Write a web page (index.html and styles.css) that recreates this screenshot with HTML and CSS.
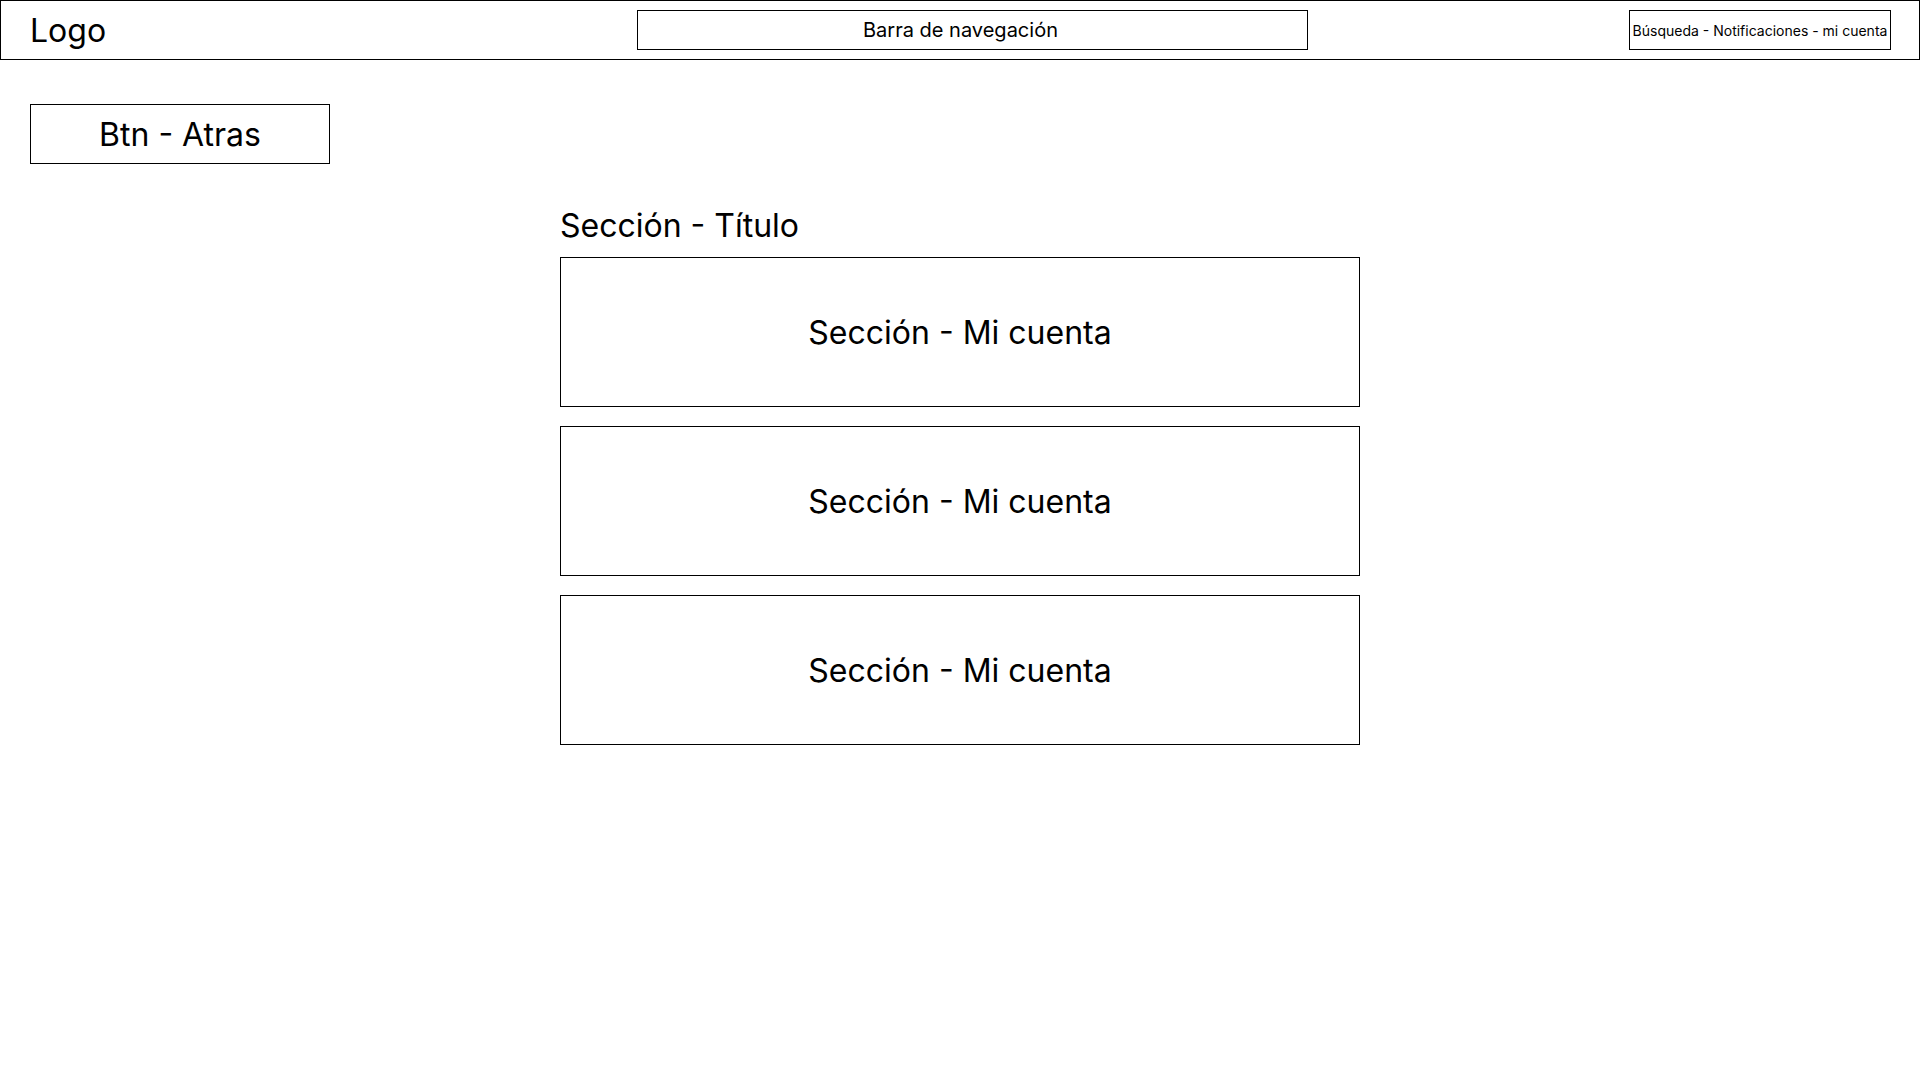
FILE: index.html
```html
<!DOCTYPE html>
<html lang="es">
<head>
<meta charset="utf-8">
<title>Mi cuenta</title>
<link rel="stylesheet" href="styles.css">
</head>
<body>
<header class="topbar">
  <div class="logo">Logo</div>
  <nav class="navbar"><span>Barra de navegación</span></nav>
  <div class="tools">Búsqueda - Notificaciones - mi cuenta</div>
</header>
<main class="page">
  <div class="back-row">
    <button class="back-btn" type="button">Btn - Atras</button>
  </div>
  <section class="content">
    <h1 class="section-title">Sección - Título</h1>
    <div class="cards">
      <div class="card">Sección - Mi cuenta</div>
      <div class="card">Sección - Mi cuenta</div>
      <div class="card">Sección - Mi cuenta</div>
    </div>
  </section>
</main>
</body>
</html>
```
FILE: styles.css
```css
* {
  box-sizing: border-box;
}

html, body {
  margin: 0;
  padding: 0;
  background: #ffffff;
}

body {
  font-family: Inter, "Noto Sans", "Liberation Sans", sans-serif;
  color: #000000;
  width: 1920px;
}

.topbar {
  height: 60px;
  border: 1px solid #000000;
  display: flex;
  align-items: center;
  padding: 0 28px 0 29px;
}

.logo {
  font-size: 32px;
  line-height: 39px;
  width: 607px;
  flex: none;
}

.navbar {
  width: 671px;
  height: 40px;
  border: 1px solid #000000;
  display: flex;
  align-items: center;
  justify-content: center;
  padding-right: 24px;
  font-size: 20px;
  flex: none;
}

.tools {
  margin-left: auto;
  width: 262px;
  height: 40px;
  border: 1px solid #000000;
  display: flex;
  align-items: center;
  justify-content: center;
  font-size: 14px;
  white-space: nowrap;
  flex: none;
}

.page {
  padding-top: 44px;
}

.back-row {
  padding-left: 30px;
}

.back-btn {
  width: 300px;
  height: 60px;
  border: 1px solid #000000;
  background: #ffffff;
  font-family: inherit;
  font-size: 32px;
  color: #000000;
  padding: 0;
  border-radius: 0;
  display: flex;
  align-items: center;
  justify-content: center;
}

.content {
  width: 800px;
  margin: 42px auto 0;
}

.section-title {
  font-size: 32px;
  font-weight: 400;
  line-height: 39px;
  margin: 0 0 12px;
}

.cards {
  display: flex;
  flex-direction: column;
  gap: 19px;
}

.card {
  height: 150px;
  border: 1px solid #000000;
  display: flex;
  align-items: center;
  justify-content: center;
  font-size: 32px;
}
```
